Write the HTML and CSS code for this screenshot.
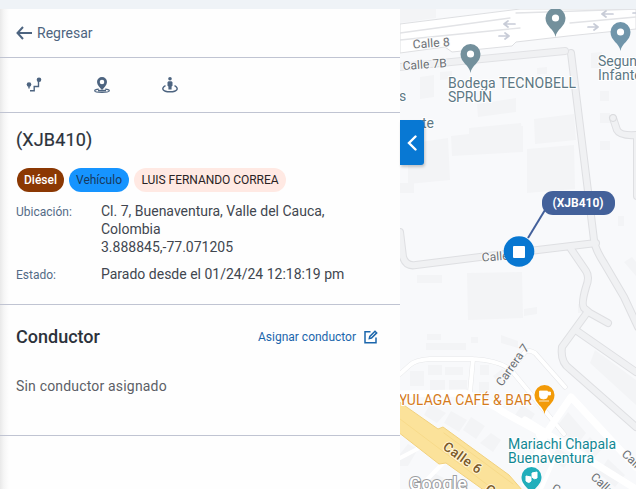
FILE: index.html
```html
<!DOCTYPE html>
<html lang="es">
<head>
<meta charset="utf-8">
<title>Detalle del vehículo</title>
<link rel="stylesheet" href="styles.css">
</head>
<body>
<div class="topbar"></div>
<main class="layout">
  <aside class="panel">
    <a class="back">
      <svg width="16" height="14" viewBox="0 0 16 14"><path d="M7 1 1.500 7 7 13M1.500 7H16" fill="none" stroke="currentColor" stroke-width="2"/></svg>
      <span>Regresar</span>
    </a>
    <nav class="tools">
      <svg width="16" height="16" viewBox="0 0 16 16"><circle cx="3" cy="7.500" r="2.300"/><circle cx="13" cy="2.800" r="2.300"/><path d="M3 8v3.500M4 13.700h4.200V9.500h4.300V4" fill="none" stroke="currentColor" stroke-width="1.400"/></svg>
      <svg width="16" height="16" viewBox="0 0 16 16"><path fill-rule="evenodd" d="M8 0a5 5 0 0 0-5 5c0 3 3 5.600 5 8 2-2.400 5-5 5-8a5 5 0 0 0-5-5Zm0 2.700a2.300 2.300 0 1 1 0 4.600 2.300 2.300 0 0 1 0-4.600Z"/><path d="M4.800 12.100C2 12.300.7 13 .7 13.700c0 1 3.200 1.600 7.300 1.600s7.300-.6 7.300-1.600c0-.7-1.300-1.400-4.100-1.600" fill="none" stroke="currentColor" stroke-width="1.200"/><path d="M4 12.800h8v1.700H4z"/></svg>
      <svg width="16" height="16" viewBox="0 0 16 16"><circle cx="8" cy="1.800" r="1.800"/><path d="M6.500 4.200h3l1 1v3.500l-.9.700V12.500H6.400V9.400l-.9-.7V5.200Z"/><path d="M3.500 8.700C-1 11 0 14.800 8 14.800s9-3.800 4.500-6.100" fill="none" stroke="currentColor" stroke-width="1.400"/></svg>
    </nav>
    <section class="vehicle">
      <h1>(XJB410)</h1>
      <div class="tags">
        <span class="tag tag-fuel">Diésel</span>
        <span class="tag tag-type">Vehículo</span>
        <span class="tag tag-owner">LUIS FERNANDO CORREA</span>
      </div>
      <dl>
        <dt>Ubicación:</dt>
        <dd>Cl. 7, Buenaventura, Valle del Cauca,<br>Colombia<br>3.888845,-77.071205</dd>
        <dt>Estado:</dt>
        <dd>Parado desde el 01/24/24 12:18:19 pm</dd>
      </dl>
    </section>
    <section class="driver">
      <header>
        <h2>Conductor</h2>
        <a class="assign"><span>Asignar conductor</span>
          <svg width="14" height="14" viewBox="0 0 14 14" fill="none" stroke="currentColor" stroke-width="1.500"><path d="M6.500 1.700H1v11h11V7.500M5.300 8.600l.5-2.200L11 1.200l1.700 1.700-5.200 5.200Z"/></svg>
        </a>
      </header>
      <p>Sin conductor asignado</p>
    </section>
  </aside>
  <div class="map">
    <svg class="canvas" width="236" height="480" viewBox="400 9 236 480">
      <g class="building">
        <path d="M400 9h36v9l-36 5ZM414 143l34-5 2 42-42 4v-40ZM451 136l18-2v-6l52-5 2 29-71 4ZM400 183h14v10h-14ZM477 104l39-6v14l-38 5ZM534 119l40-5 2 26-41 4ZM516 126h7v26h-7ZM527 149l47-4 1 44-48 4ZM467 273l55-1v36l-54 12ZM467 273l55-1 1 46-55 2ZM524 309l13-2v7l-13 2ZM417 275h25v8h-25ZM591 53l11-1v16h-11ZM600 91h9v10h-9ZM600 113h10v10h-10ZM600 141h10v9h-10ZM618 216h6v10h-6ZM537 68l10-1v7h-10ZM420 77l14-2v22l-14 2ZM440 72l12-1v8l-12 1ZM578 304h7v9h-7ZM624 262l8-5 4 5v14ZM426 343h40v7h-40ZM427 334h14v6h-14ZM471 337h7v6h-7ZM501 335l17 6v7l-17-5Z"/>
        <path d="M410 371h14v15h-14ZM428 365h14v10h-14ZM445 367h18v8h-18ZM430 380h15v10h-15ZM449 380h18v11h-18ZM480 365h9v10h-9ZM493 376l9-7 9 7-10 10ZM479 382h10v16h-10ZM430 404l16 9-9 10-13-8ZM451 411l16 9-8 12-15-9ZM471 417l14 9-9 13-13-9ZM491 433l10 7-8 12-13-9ZM522 405l13 9-7 10-13-9ZM558 425l10-13 18 21-10 13ZM590 437l12 12-9 10-12-13ZM558 448l14 9-8 11-15-9ZM608 459l17 16-10 12-17-14ZM408 444l10 5-10 17h-8v-12ZM432 472l12 6-6 11h-15ZM590 363l46 42v-25l-41-30Z"/>
      </g>
      <path class="road-edge" d="M400 232l3 25q3 10 13 8l64-8 116-14M571 249l15 22q4 6 0 16-5 17-2 21l6 5 18 10M586 314l-24 33q-2 15 8 22l66 58M577 331l59 41M571 53l23 187q1 9 10 23l20 34 14 30M613 118l4 12q3 6 19 5M637 138v58"/>
      <path class="road" d="M400 232l3 25q3 10 13 8l64-8 116-14M571 249l15 22q4 6 0 16-5 17-2 21l6 5 18 10M586 314l-24 33q-2 15 8 22l66 58M577 331l59 41M571 53l23 187q1 9 10 23l20 34 14 30M613 118l4 12q3 6 19 5M637 138v58"/>
      <path class="lane-edge" d="M400 67l165-16"/><path class="lane" d="M400 67l165-16"/>
      <path class="avenue-edge" d="M400 24 520 9h116v20l-68 7-52 6-4 4-60 6-7-5-45 6Z"/>
      <path class="median" d="M400 33l110-15M400 40l120-12M570 23l66-6M516 13l120-4"/>
      <path class="local-edge" d="M400 374l10-9q5-5 20-6h43q25 1 38 11l53 64M473 359l-3 33M511 370l14-18q4-3 10 1l30 34"/>
      <path class="local" d="M400 374l10-9q5-5 20-6h43q25 1 38 11l53 64M473 359l-3 33M511 370l14-18q4-3 10 1l30 34M400 458l23-12M418 489l28-29M541 489l12-27-15-27"/>
      <path class="street" d="M400 394l65-1q24 9 40 20l40 22 26-38 65 70M545 435l-20 48M525 420l111 69"/>
      <path class="highway" d="M398 401 438 429l5-2 66 48 14 16h-38L446 463l-7 1-41-32Z"/>
      <path class="highway-line" d="M400 419l93 70M444 433l69 51"/>
      <path class="arrows" d="M515 24h-11m4-3-4 3 4 3M499 36h10m-4-3 4 3-4 3M613 14h-11m4-3-4 3 4 3M588 27h10m-4-3 4 3-4 3M636 13h-3"/>
      <circle cx="613" cy="118" r="3.500" fill="#f0f1f3" stroke="#d9dadd"/>

      <g class="street-name">
        <text x="413" y="48.500" transform="rotate(-4 413 48.500)" textLength="37">Calle 8</text>
        <text x="403" y="70" transform="rotate(-4 403 70)" textLength="44">Calle 7B</text>
        <text x="482" y="261.500" transform="rotate(-4 482 261.500)" textLength="37">Calle 7</text>
        <text x="502" y="387" transform="rotate(-55 502 387)" textLength="48">Carrera 7</text>
        <text x="621" y="455" transform="rotate(43 621 455)">Calle 5</text>
        <text x="590" y="478" transform="rotate(43 590 478)">Calle 5</text>
        <text x="551" y="491" transform="rotate(25 551 491)">C</text>
      </g>
      <g class="highway-name">
        <text x="442" y="448.500" transform="rotate(36 442 448.500)" textLength="44">Calle 6</text>
        <text x="484" y="491" transform="rotate(36 484 491)">Calle 6</text>
      </g>
      <g class="place">
        <text x="448" y="88" textLength="128">Bodega TECNOBELL</text>
        <text x="448" y="101.500" textLength="44">SPRUN</text>
        <text x="598" y="66">Segundo</text>
        <text x="598" y="80">Infante</text>
        <text x="399" y="101">s</text>
        <text x="422" y="128">te</text>
      </g>
      <text class="place-food" x="399" y="405" textLength="133">YULAGA CAFÉ &amp; BAR</text>
      <g class="place-fun"><text x="508" y="449" textLength="108">Mariachi Chapala</text><text x="508" y="462.500" textLength="86">Buenaventura</text></g>

      <defs><path id="pin" d="M0 0c-1-8-10-10-10-19a10 10 0 0 1 20 0C10-10 1-8 0 0Z"/></defs>
      <g fill="#73909c"><use href="#pin" x="470.500" y="73"/><use href="#pin" x="555.500" y="37"/><use href="#pin" x="620.500" y="51" fill="#7095aa"/></g>
      <g fill="#fff"><circle cx="470.500" cy="54" r="3.600"/><circle cx="555.500" cy="18" r="3.600"/><circle cx="620.500" cy="32" r="3.600"/></g>
      <use href="#pin" x="544.500" y="414" fill="#f29a08"/>
      <path d="M539.500 391h8v5q0 3-4 3t-4-3ZM547.500 392h3v3h-3M539 401h10" fill="#fff" stroke="#fff" stroke-width=".8"/>
      <use href="#pin" x="531.500" y="496" fill="#20aebb"/>
      <path d="M526 476l5 1v4q-2 3-5 0ZM532 473l5-1v6q-3 2-5-1Z" fill="#fff" stroke="#fff"/>
      <text class="google" x="409" y="490" textLength="58">Google</text>

      <path d="M528 238l17-28" stroke="#43609b" stroke-width="2"/>
      <rect x="542" y="191" width="73" height="24" rx="11" fill="#43619a"/>
      <text class="unit" x="552.500" y="207" textLength="51">(XJB410)</text>
      <circle cx="519" cy="251.500" r="15.300" fill="#0877d1"/>
      <rect x="513" y="246" width="12" height="12" rx="1" fill="#fff"/>
    </svg>
    <button class="collapse" aria-label="Ocultar panel"><svg width="10" height="16" viewBox="0 0 10 16"><path d="M8.500 1.500 2 8l6.500 6.500" fill="none" stroke="#fff" stroke-width="2.400" stroke-linecap="round"/></svg></button>
  </div>
</main>
</body>
</html>
```
FILE: styles.css
```css
* { box-sizing: border-box; }
body { margin: 0; width: 636px; height: 489px; overflow: hidden; font-family: Roboto, sans-serif; background: #fefefe; }
h1, h2, p, dl, dd { margin: 0; }
svg { display: block; }
.topbar { height: 9px; background: #eff3f7; }
.layout { display: grid; grid-template-columns: 400px 236px; height: 480px; }
.panel { background: linear-gradient(90deg, #e9e9e9, #f6f6f6 4px, #fefefe 9px); }

.back { display: flex; align-items: center; gap: 5px; height: 49px; padding: 0 16px 1px; border-bottom: 1px solid #c0c4d2; color: #4d6480; font-size: 14px; }
.tools { display: flex; align-items: center; gap: 52px; height: 55px; padding: 0 26px; border-bottom: 1px solid #c0c4d2; color: #4d6480; }
.tools svg { fill: currentColor; }

.vehicle { height: 192px; padding: 15px 16px; border-bottom: 1px solid #c0c4d2; }
h1, h2 { color: #2c323b; font-size: 18px; font-weight: 500; line-height: 24px; }
h1 { font-weight: 400; letter-spacing: .15px; -webkit-text-stroke: .2px; }
.tags { display: flex; gap: 5px; margin-top: 16px; padding-left: 1px; }
.tag { height: 24px; border-radius: 12px; font-size: 12px; line-height: 24px; white-space: nowrap; text-align: center; }
.tag-fuel { width: 47px; background: #8b3803; color: #fff; font-weight: 500; }
.tag-type { width: 60px; background: #1694ff; color: #18395e; }
.tag-owner { width: 152px; background: #ffe9e3; color: #292324; letter-spacing: -.04px; }
dl { display: grid; grid-template-columns: 85px 1fr; row-gap: 9px; margin-top: 10px; line-height: 18px; }
dt { color: #536b86; font-size: 12px; padding-top: 1px; }
dd { color: #41464f; font-size: 14px; }

.driver { height: 131px; padding: 20px 16px; border-bottom: 1px solid #c0c4d2; }
.driver header { display: flex; justify-content: space-between; align-items: center; padding-right: 6px; }
.assign { display: flex; align-items: center; gap: 8px; color: #1b66ac; font-size: 12px; }
.driver p { margin-top: 27px; color: #5c5f66; font-size: 14px; line-height: 20px; letter-spacing: .18px; }

.map { position: relative; background: #f8f9fb; }
.building { fill: #f3f4f6; }
.road-edge, .road, .local, .local-edge, .lane, .lane-edge, .street, .median, .highway-line, .arrows { fill: none; stroke-linejoin: round; stroke-linecap: round; }
.road-edge { stroke: #dedfe2; stroke-width: 8; }
.road { stroke: #f0f1f3; stroke-width: 6; }
.lane-edge { stroke: #e1e2e5; stroke-width: 8; }
.lane { stroke: #f0f1f3; stroke-width: 6; }
.avenue-edge { fill: #fff; stroke: #dedfe2; }
.median { stroke: #e2e3e6; stroke-width: 1.3; }
.local-edge { stroke: #e6e7e9; stroke-width: 5; }
.local { stroke: #fff; stroke-width: 4; }
.street { stroke: #fff; stroke-width: 7; }
.highway { fill: #fbe29a; stroke: #f2d17d; }
.highway-line { stroke: #f7da8a; }
.arrows { stroke: #c8ccd7; stroke-width: 1.7; }
.street-name { fill: #6b7075; font-size: 12px; stroke: #fafafa; stroke-width: 2px; paint-order: stroke; }
.highway-name { fill: #7b5a28; font-size: 13.5px; font-weight: 500; stroke: #fff5d9; stroke-width: 2px; paint-order: stroke; }
.place, .place-food, .place-fun { font-size: 14px; stroke: #fff; stroke-width: 2px; paint-order: stroke; }
.place { fill: #5d7884; }
.place-food { fill: #d57b1c; }
.place-fun { fill: #128894; }
.google { fill: #fff; stroke: #9b9da1; stroke-width: 2px; paint-order: stroke; font: 500 18px Roboto, sans-serif; }
.unit { fill: #fff; font-size: 12px; font-weight: 700; }
.collapse { position: absolute; left: 0; top: 111px; display: grid; place-items: center; width: 24px; height: 45px; padding: 0; border: 0; border-radius: 0 3px 3px 0; background: #0878d3; box-shadow: 1px 2px 3px #0003; }
```
